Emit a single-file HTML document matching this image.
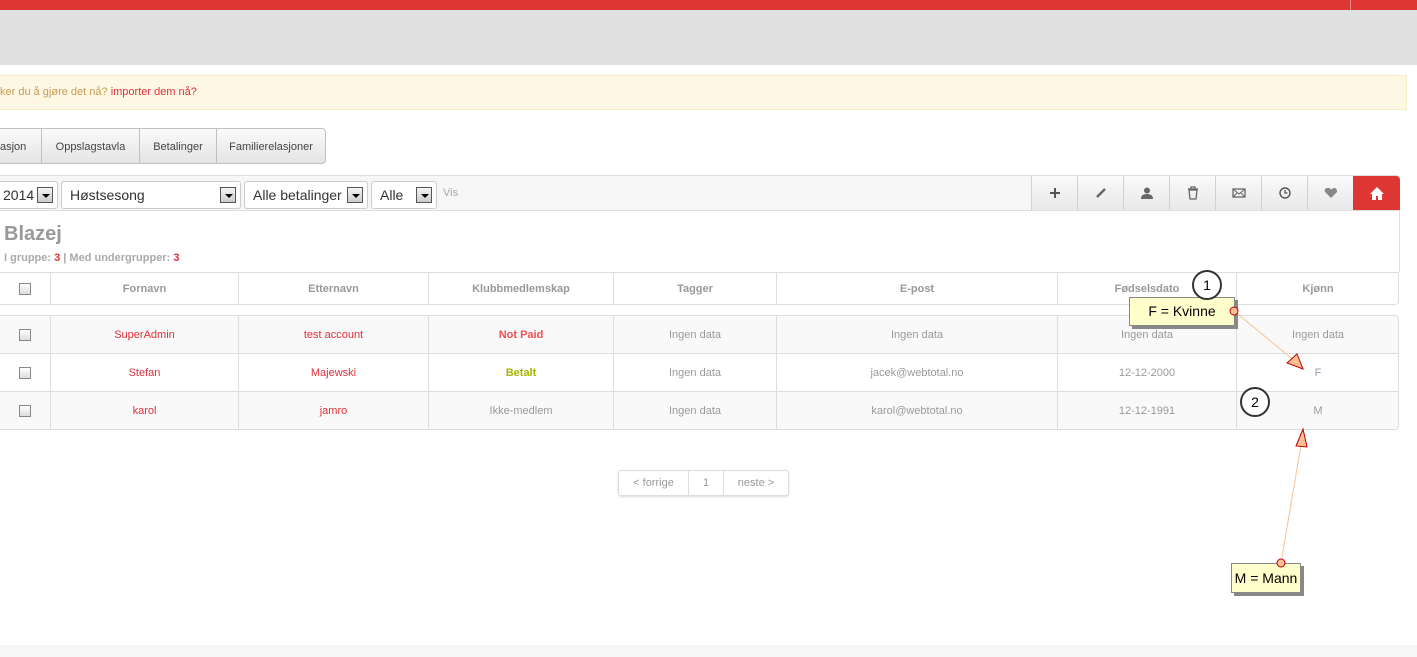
<!DOCTYPE html><html><head><meta charset="utf-8"><style>
*{box-sizing:border-box;margin:0;padding:0}
body{width:1417px;height:657px;position:relative;overflow:hidden;background:#fff;font-family:"Liberation Sans",Arial,sans-serif;font-size:11px;color:#999}
.a{position:absolute}
.tab{position:absolute;top:128px;height:36px;line-height:36px;text-align:center;font-size:11px;color:#444;background:linear-gradient(#fafafa,#e4e4e4);border:1px solid #c0c0c0;border-right:none}
.sel{position:absolute;top:181px;height:28px;border:1px solid #ccc;border-radius:3px;background:#fff;font-size:14px;color:#333;line-height:26px;padding-left:8px}
.sel i{position:absolute;right:4px;top:5px;width:16px;height:16px;border:1px solid #555;background:linear-gradient(#f4f4f4,#ccc)}
.sel i:after{content:"";position:absolute;left:4px;top:6px;border:4px solid transparent;border-top:4px solid #000;border-bottom:0}
.tb{position:absolute;top:176px;width:46px;height:34px;border-left:1px solid #d0d0d0;background:linear-gradient(#fafafa,#e8e8e8);display:flex;align-items:center;justify-content:center}
.row{position:absolute;left:0;width:1399px;border-bottom:1px solid #ddd}
.c{position:absolute;top:0;height:100%;display:flex;align-items:center;justify-content:center;border-right:1px solid #ddd}
.cb{width:12px;height:12px;border:1px solid #888;background:linear-gradient(#fff,#ddd)}
.h .c{font-weight:bold;color:#999}
.red{color:#e0303a}
.note{position:absolute;background:#ffffcc;border:1px solid #888;box-shadow:3px 3px 0 #888;font-size:14px;color:#000;text-align:center;white-space:nowrap}
.num{position:absolute;width:30px;height:30px;border:2px solid #333;border-radius:50%;background:#fff;text-align:center;line-height:26px;font-size:14px;color:#000}
</style></head><body>
<div class="a" style="left:0;top:0;width:1417px;height:10px;background:#dd3633"></div>
<div class="a" style="left:1350px;top:0;width:1px;height:10px;background:#f08a86"></div>
<div class="a" style="left:0;top:10px;width:1417px;height:55px;background:#e1e0e1"></div>
<div class="a" style="left:0;top:75px;width:1407px;height:35px;background:#fdf7e3;border:1px solid #f7ecc8;border-left:none;line-height:33px;color:#c89d5a;font-size:11px">ker du å gjøre det nå? <span class="red">importer dem nå?</span></div>
<div class="tab" style="left:-1px;width:42px;text-align:left">asjon</div>
<div class="tab" style="left:41px;width:98px">Oppslagstavla</div>
<div class="tab" style="left:139px;width:77px">Betalinger</div>
<div class="tab" style="left:216px;width:110px;border-right:1px solid #c0c0c0;border-radius:0 4px 4px 0">Familierelasjoner</div>
<div class="a" style="left:0;top:175px;width:1400px;height:36px;background:#f6f6f6;border:1px solid #ddd;border-left:none;border-radius:0 4px 0 0"></div>
<div class="sel" style="left:-6px;width:64px;padding-left:8px">2014<i></i></div>
<div class="sel" style="left:61px;width:180px">Høstsesong<i></i></div>
<div class="sel" style="left:244px;width:124px">Alle betalinger<i></i></div>
<div class="sel" style="left:371px;width:66px">Alle<i></i></div>
<div class="a" style="left:443px;top:187px;color:#aaa">Vis</div>
<div class="tb" style="left:1031px"><svg width="14" height="14"><path d="M7 2v10M2 7h10" stroke="#555" stroke-width="2"/></svg></div>
<div class="tb" style="left:1077px"><svg width="14" height="14"><path d="M3 11l8-8" stroke="#666" stroke-width="2.5"/></svg></div>
<div class="tb" style="left:1123px"><svg width="14" height="14"><circle cx="7" cy="4.5" r="3" fill="#666"/><path d="M1 13q0-5 6-5t6 5z" fill="#666"/></svg></div>
<div class="tb" style="left:1169px"><svg width="14" height="14"><path d="M2 3h10M5 3V1h4v2M3 4h8l-1 9H4z" stroke="#666" fill="none" stroke-width="1.3"/></svg></div>
<div class="tb" style="left:1215px"><svg width="14" height="12"><rect x="1" y="2" width="12" height="8" fill="none" stroke="#666" stroke-width="1.3"/><path d="M1 2l6 5 6-5M1 10l4-4M13 10l-4-4" stroke="#666" fill="none"/></svg></div>
<div class="tb" style="left:1261px"><svg width="14" height="14"><circle cx="7" cy="7" r="5" fill="none" stroke="#555" stroke-width="1.4"/><path d="M7 4v3h2.5" stroke="#555" fill="none" stroke-width="1.3"/></svg></div>
<div class="tb" style="left:1307px"><svg width="14" height="12"><path d="M7 11L1 5Q0 1 3.5 1T7 3Q8 1 10.5 1T13 5z" fill="#888"/></svg></div>
<div class="a" style="left:1353px;top:176px;width:47px;height:34px;background:#dd3633;border-radius:0 4px 0 0;display:flex;align-items:center;justify-content:center"><svg width="14" height="13"><path d="M7 0L0 7h2v6h4V9h2v4h4V7h2z" fill="#fff"/></svg></div>
<div class="a" style="left:0;top:211px;width:1400px;height:61px;border-right:1px solid #ddd"></div>
<div class="a" style="left:4px;top:223px;font-size:20px;font-weight:bold;color:#999">Blazej</div>
<div class="a" style="left:4px;top:252px;font-weight:bold;color:#aaa">I gruppe: <span class="red">3</span> | Med undergrupper: <span class="red">3</span></div>
<div class="row h" style="top:272px;height:33px;border-top:1px solid #ddd;border-right:1px solid #ddd;border-radius:0 0 4px 0">
<div class="c" style="left:0;width:51px"><div class="cb"></div></div>
<div class="c" style="left:51px;width:188px">Fornavn</div><div class="c" style="left:239px;width:190px">Etternavn</div><div class="c" style="left:429px;width:185px">Klubbmedlemskap</div><div class="c" style="left:614px;width:163px">Tagger</div><div class="c" style="left:777px;width:281px">E-post</div><div class="c" style="left:1058px;width:179px">Fødselsdato</div><div class="c" style="left:1237px;width:162px;border:none">Kjønn</div></div>
<div class="row" style="top:315px;height:39px;background:#f9f9f9;border-top:1px solid #ddd;border-right:1px solid #ddd;border-radius:0 4px 0 0">
<div class="c" style="left:0;width:51px"><div class="cb"></div></div>
<div class="c red" style="left:51px;width:188px">SuperAdmin</div><div class="c red" style="left:239px;width:190px">test account</div><div class="c" style="left:429px;width:185px;color:#f05050;font-weight:bold">Not Paid</div><div class="c" style="left:614px;width:163px">Ingen data</div><div class="c" style="left:777px;width:281px">Ingen data</div><div class="c" style="left:1058px;width:179px">Ingen data</div><div class="c" style="left:1237px;width:162px;border:none">Ingen data</div></div>
<div class="row" style="top:354px;height:38px;background:#fff;border-right:1px solid #ddd">
<div class="c" style="left:0;width:51px"><div class="cb"></div></div>
<div class="c red" style="left:51px;width:188px">Stefan</div><div class="c red" style="left:239px;width:190px">Majewski</div><div class="c" style="left:429px;width:185px;color:#a8b400;font-weight:bold">Betalt</div><div class="c" style="left:614px;width:163px">Ingen data</div><div class="c" style="left:777px;width:281px">jacek@webtotal.no</div><div class="c" style="left:1058px;width:179px">12-12-2000</div><div class="c" style="left:1237px;width:162px;border:none;color:#99a">F</div></div>
<div class="row" style="top:392px;height:38px;background:#f9f9f9;border-right:1px solid #ddd;border-radius:0 0 4px 0">
<div class="c" style="left:0;width:51px"><div class="cb"></div></div>
<div class="c red" style="left:51px;width:188px">karol</div><div class="c red" style="left:239px;width:190px">jamro</div><div class="c" style="left:429px;width:185px">Ikke-medlem</div><div class="c" style="left:614px;width:163px">Ingen data</div><div class="c" style="left:777px;width:281px">karol@webtotal.no</div><div class="c" style="left:1058px;width:179px">12-12-1991</div><div class="c" style="left:1237px;width:162px;border:none">M</div></div>
<div class="a" style="left:618px;top:470px;width:171px;height:26px;border:1px solid #ddd;border-radius:3px;box-shadow:0 1px 2px #ddd;display:flex;line-height:24px;color:#999">
<div style="width:70px;text-align:center;border-right:1px solid #ddd">&lt; forrige</div><div style="width:35px;text-align:center;border-right:1px solid #ddd">1</div><div style="flex:1;text-align:center">neste &gt;</div></div>
<svg class="a" style="left:0;top:0" width="1417" height="657">
<line x1="1234" y1="311" x2="1296" y2="362" stroke="#f5c49a" stroke-width="1"/>
<polygon points="1287,363 1297,354 1303,369" fill="#fbbf94" stroke="#b00" stroke-width="1"/>
<line x1="1281" y1="563" x2="1301" y2="445" stroke="#f5c49a" stroke-width="1"/>
<polygon points="1296,446 1303,429 1307,447" fill="#fbbf94" stroke="#b00" stroke-width="1"/>
</svg>
<div class="note" style="left:1129px;top:297px;width:106px;height:29px;line-height:27px">F = Kvinne</div>
<div class="note" style="left:1231px;top:563px;width:70px;height:30px;line-height:28px">M = Mann</div>
<svg class="a" style="left:0;top:0" width="1417" height="657">
<circle cx="1234" cy="311" r="4" fill="#fbbf94" stroke="#b00"/>
<circle cx="1281" cy="563" r="4" fill="#fbbf94" stroke="#b00"/>
</svg>
<div class="num" style="left:1192px;top:270px">1</div>
<div class="num" style="left:1240px;top:387px">2</div>
<div class="a" style="left:0;top:645px;width:1417px;height:12px;background:#f7f7f7"></div>
</body></html>
